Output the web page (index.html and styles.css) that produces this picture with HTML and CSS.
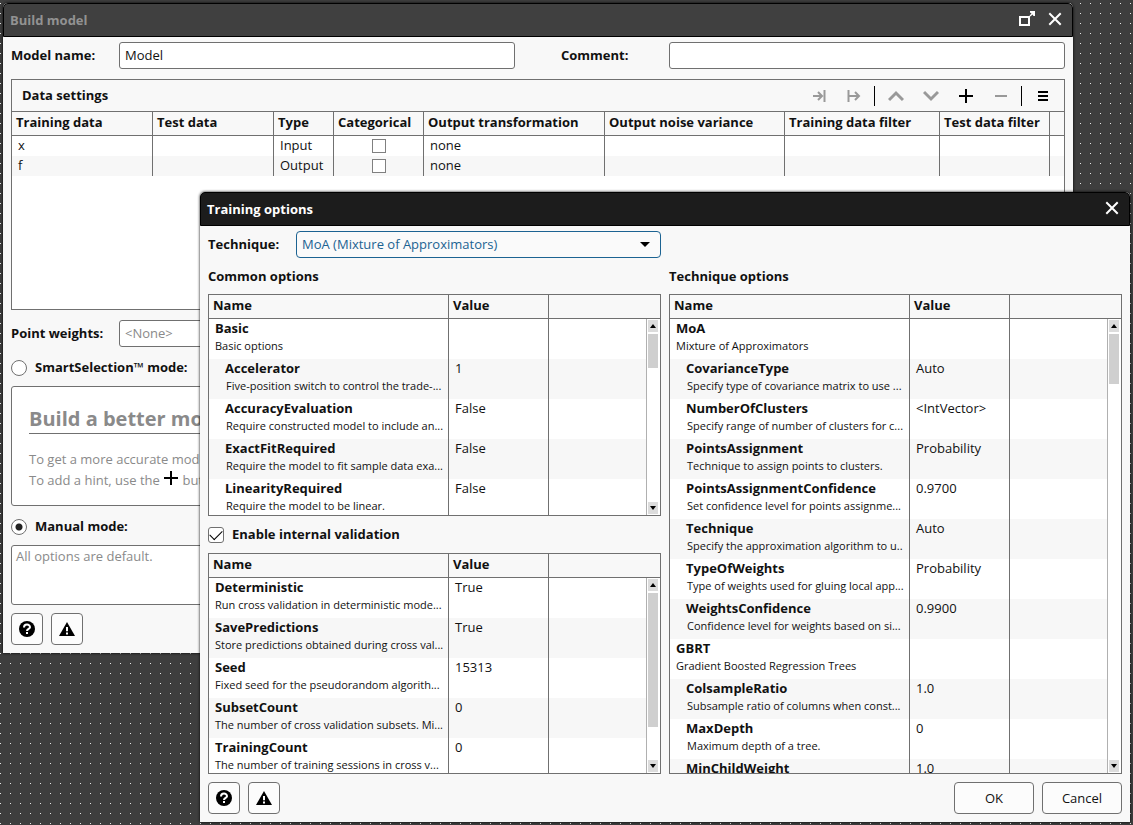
FILE: index.html
```html
<!DOCTYPE html>
<html lang="en">
<head>
  <meta charset="utf-8">
  <title>Build model</title>
  <meta name="viewport" content="width=device-width, initial-scale=1">
  <link rel="stylesheet" href="styles.css">
</head>
<body>

<!-- shared icons -->
<svg class="sprite" aria-hidden="true">
  <symbol id="close" viewBox="0 0 14 14"><path d="M2 2L12 12M12 2L2 12" stroke="#fff" stroke-width="2" fill="none" stroke-linecap="square"/></symbol>
  <symbol id="help" viewBox="0 0 16 16"><circle cx="8" cy="8" r="8"/><path d="M5 6.500C5 2.600 11 2.700 11 6.300C11 8 8 7.900 8 10" stroke="#fff" stroke-width="2" fill="none"/><rect x="7" y="11" width="2" height="2" fill="#fff"/></symbol>
  <symbol id="warning" viewBox="0 0 16 16"><path d="M8 1L16 15H0Z"/><path d="M7 6H9V10.300H7ZM7 11.500H9V13.500H7Z" fill="#fff"/></symbol>
  <symbol id="plus" viewBox="0 0 14 14"><path d="M7 0V14M0 7H14" stroke="#000" stroke-width="2"/></symbol>
</svg>

<!-- Build model window -->
<div class="window build-window">
  <header class="titlebar">
    <h1>Build model</h1>
    <button class="title-btn" aria-label="Maximize">
      <svg width="18" height="18" viewBox="0 0 18 18"><path d="M2 7H11V15H2Z" stroke="#fff" stroke-width="2" fill="none"/><path d="M12 1H17V6H15.500L14.500 4.500L12.500 6.500L11.500 5.500L13.500 3.500L12 2.500Z" fill="#fff"/></svg>
    </button>
    <button class="title-btn" aria-label="Close"><svg width="14" height="14"><use href="#close"/></svg></button>
  </header>

  <div class="build-body">
    <div class="name-row">
      <label for="modelName">Model name:</label>
      <input type="text" class="field" id="modelName" value="Model">
      <label for="comment" class="comment-label">Comment:</label>
      <input type="text" class="field" id="comment">
    </div>

    <section class="data-panel">
      <div class="toolbar">
        <h2>Data settings</h2>
        <button class="tool" aria-label="Move to end"><svg width="14" height="14" viewBox="0 0 14 14" class="dim"><path d="M1 7H10M6 3L10 7L6 11M12.500 1V13"/></svg></button>
        <button class="tool" aria-label="Move from start"><svg width="14" height="14" viewBox="0 0 14 14" class="dim"><path d="M1.500 1V13M2 7H12M8 3L12 7L8 11"/></svg></button>
        <span class="divider"></span>
        <button class="tool" aria-label="Move up"><svg width="16" height="14" viewBox="0 0 16 14" class="dim thick"><path d="M1 11L8 4L15 11"/></svg></button>
        <button class="tool" aria-label="Move down"><svg width="16" height="14" viewBox="0 0 16 14" class="dim thick"><path d="M1 3L8 10L15 3"/></svg></button>
        <button class="tool" aria-label="Add"><svg width="14" height="14"><use href="#plus"/></svg></button>
        <button class="tool" aria-label="Remove"><svg width="14" height="14" viewBox="0 0 14 14" class="dim"><path d="M1 7H13"/></svg></button>
        <span class="divider"></span>
        <button class="tool" aria-label="Menu"><svg width="12" height="12" viewBox="0 0 12 12"><path d="M1 2H11M1 6H11M1 10H11" stroke="#000" stroke-width="2"/></svg></button>
      </div>
      <table class="data-table">
        <colgroup>
          <col class="c-train"><col class="c-test"><col class="c-type"><col class="c-cat"><col class="c-trans"><col class="c-noise"><col class="c-trfilter"><col class="c-tefilter"><col>
        </colgroup>
        <thead>
          <tr><th>Training data</th><th>Test data</th><th>Type</th><th>Categorical</th><th>Output transformation</th><th>Output noise variance</th><th>Training data filter</th><th>Test data filter</th><th></th></tr>
        </thead>
        <tbody>
          <tr><td>x</td><td></td><td>Input</td><td class="check-cell"><input type="checkbox" class="small-check" aria-label="x categorical"></td><td>none</td><td></td><td></td><td></td><td></td></tr>
          <tr><td>f</td><td></td><td>Output</td><td class="check-cell"><input type="checkbox" class="small-check" aria-label="f categorical"></td><td>none</td><td></td><td></td><td></td><td></td></tr>
        </tbody>
      </table>
    </section>

    <div class="weights-row">
      <label for="weights">Point weights:</label>
      <input type="text" class="field" id="weights" placeholder="&lt;None&gt;">
    </div>

    <div class="mode"><input type="radio" name="mode" id="smartMode"><label for="smartMode">SmartSelection™ mode:</label></div>
    <div class="hints">
      <h2>Build a better model with hints</h2>
      <p>To get a more accurate model, add hints.<br>To add a hint, use the <svg width="16" height="14"><use href="#plus"/></svg> button.</p>
    </div>

    <div class="mode"><input type="radio" name="mode" id="manualMode" checked><label for="manualMode">Manual mode:</label></div>
    <textarea class="manual" aria-label="Manual options" placeholder="All options are default."></textarea>

    <footer class="actions">
      <button class="icon-btn" aria-label="Help"><svg width="16" height="16"><use href="#help"/></svg></button>
      <button class="icon-btn" aria-label="Warnings"><svg width="16" height="16"><use href="#warning"/></svg></button>
    </footer>
  </div>
</div>

<!-- Training options window -->
<div class="window options-window">
  <header class="titlebar">
    <h1>Training options</h1>
    <button class="title-btn" aria-label="Close"><svg width="14" height="14"><use href="#close"/></svg></button>
  </header>

  <div class="options-body">
    <div class="columns">
      <div class="column">
        <div class="technique">
          <label for="technique">Technique:</label>
          <div class="select-wrap">
            <select id="technique"><option>MoA (Mixture of Approximators)</option></select>
          </div>
        </div>
        <h2>Common options</h2>
        <div class="option-panel common">
          <table class="option-table">
            <colgroup><col class="c-name"><col class="c-value"><col></colgroup>
            <thead><tr><th>Name</th><th>Value</th><th></th></tr></thead>
            <tbody>
              <tr><td><b>Basic</b><small>Basic options</small></td><td></td><td></td></tr>
              <tr class="sub"><td><b>Accelerator</b><small>Five-position switch to control the trade-...</small></td><td>1</td><td></td></tr>
              <tr class="sub"><td><b>AccuracyEvaluation</b><small>Require constructed model to include an...</small></td><td>False</td><td></td></tr>
              <tr class="sub"><td><b>ExactFitRequired</b><small>Require the model to fit sample data exa...</small></td><td>False</td><td></td></tr>
              <tr class="sub"><td><b>LinearityRequired</b><small>Require the model to be linear.</small></td><td>False</td><td></td></tr>
            </tbody>
          </table>
          <div class="scrollbar"><i class="up"></i><i class="thumb"></i><i class="down"></i></div>
        </div>

        <div class="validation"><input type="checkbox" id="validation" checked><label for="validation">Enable internal validation</label></div>
        <div class="option-panel cross">
          <table class="option-table">
            <colgroup><col class="c-name"><col class="c-value"><col></colgroup>
            <thead><tr><th>Name</th><th>Value</th><th></th></tr></thead>
            <tbody>
              <tr><td><b>Deterministic</b><small>Run cross validation in deterministic mode...</small></td><td>True</td><td></td></tr>
              <tr><td><b>SavePredictions</b><small>Store predictions obtained during cross val...</small></td><td>True</td><td></td></tr>
              <tr><td><b>Seed</b><small>Fixed seed for the pseudorandom algorith...</small></td><td>15313</td><td></td></tr>
              <tr><td><b>SubsetCount</b><small>The number of cross validation subsets. Mi...</small></td><td>0</td><td></td></tr>
              <tr><td><b>TrainingCount</b><small>The number of training sessions in cross v...</small></td><td>0</td><td></td></tr>
            </tbody>
          </table>
          <div class="scrollbar"><i class="up"></i><i class="thumb"></i><i class="down"></i></div>
        </div>
      </div>

      <div class="column technique-column">
        <h2>Technique options</h2>
        <div class="option-panel specific">
          <table class="option-table">
            <colgroup><col class="c-name"><col class="c-value"><col></colgroup>
            <thead><tr><th>Name</th><th>Value</th><th></th></tr></thead>
            <tbody>
              <tr><td><b>MoA</b><small>Mixture of Approximators</small></td><td></td><td></td></tr>
              <tr class="sub"><td><b>CovarianceType</b><small>Specify type of covariance matrix to use ...</small></td><td>Auto</td><td></td></tr>
              <tr class="sub"><td><b>NumberOfClusters</b><small>Specify range of number of clusters for c...</small></td><td>&lt;IntVector&gt;</td><td></td></tr>
              <tr class="sub"><td><b>PointsAssignment</b><small>Technique to assign points to clusters.</small></td><td>Probability</td><td></td></tr>
              <tr class="sub"><td><b>PointsAssignmentConfidence</b><small>Set confidence level for points assignme...</small></td><td>0.9700</td><td></td></tr>
              <tr class="sub"><td><b>Technique</b><small>Specify the approximation algorithm to u..</small></td><td>Auto</td><td></td></tr>
              <tr class="sub"><td><b>TypeOfWeights</b><small>Type of weights used for gluing local app...</small></td><td>Probability</td><td></td></tr>
              <tr class="sub"><td><b>WeightsConfidence</b><small>Confidence level for weights based on si...</small></td><td>0.9900</td><td></td></tr>
              <tr><td><b>GBRT</b><small>Gradient Boosted Regression Trees</small></td><td></td><td></td></tr>
              <tr class="sub"><td><b>ColsampleRatio</b><small>Subsample ratio of columns when const...</small></td><td>1.0</td><td></td></tr>
              <tr class="sub"><td><b>MaxDepth</b><small>Maximum depth of a tree.</small></td><td>0</td><td></td></tr>
              <tr class="sub"><td><b>MinChildWeight</b><small></small></td><td>1.0</td><td></td></tr>
            </tbody>
          </table>
          <div class="scrollbar"><i class="up"></i><i class="thumb"></i><i class="down"></i></div>
        </div>
      </div>
    </div>

    <footer class="actions">
      <button class="icon-btn" aria-label="Help"><svg width="16" height="16"><use href="#help"/></svg></button>
      <button class="icon-btn" aria-label="Warnings"><svg width="16" height="16"><use href="#warning"/></svg></button>
      <span class="spacer"></span>
      <button class="text-btn">OK</button>
      <button class="text-btn">Cancel</button>
    </footer>
  </div>
</div>

</body>
</html>
```
FILE: styles.css
```css
* {
  box-sizing: border-box;
}

body {
  margin: 0;
  min-height: 100vh;
  overflow: hidden;
  position: relative;
  background-color: #3e3e3e;
  background-image: conic-gradient(from 270deg at 1px 1px, #e8e8e8 90deg, transparent 90deg);
  background-size: 10px 10px;
  background-position: 0 3px;
  font-family: "Open Sans", "Noto Sans", sans-serif;
  font-size: 13px;
  line-height: 18px;
  color: #111;
}

h1, h2, p {
  margin: 0;
  font-size: 13px;
}

label {
  font-weight: bold;
  padding-bottom: 2px;
}

button, input, select, textarea {
  font: inherit;
  color: inherit;
  margin: 0;
}

.sprite {
  display: none;
}

/* windows */
.window {
  position: absolute;
  background: #f8f8f8;
  border-radius: 5px 5px 0 0;
  box-shadow: 0 0 3px #000;
}

.build-window {
  top: 3px;
  left: 3px;
  right: 60px;
}

.options-window {
  top: 192px;
  left: 200px;
  right: 3px;
}

.titlebar {
  display: flex;
  align-items: center;
  height: 34px;
  padding: 0 10px 0 6px;
  gap: 12px;
  background: #1c1c1c;
  color: #fff;
  border: 1px solid #000;
  border-radius: 5px 5px 0 0;
}

.titlebar h1 {
  flex: 1;
}

.build-window .titlebar {
  background: #404040;
}

.build-window h1 {
  color: #929292;
}

.title-btn {
  display: flex;
  padding: 0 0 2px;
  border: none;
  background: none;
}

/* Build model */
.build-body {
  padding: 5px 8px 8px;
}

.name-row {
  display: grid;
  grid-template-columns: 108px 1fr 154px 1fr;
  align-items: center;
}

.comment-label {
  padding-left: 46px;
}

.field {
  width: 100%;
  height: 27px;
  padding: 0 5px 2px;
  border: 1px solid #707070;
  border-radius: 3px;
  background: #fff;
}

.field::placeholder,
.manual::placeholder {
  color: #8a8a8a;
}

.data-panel {
  height: 231px;
  margin: 10px 0;
  border: 1px solid #707070;
  background: #fff;
}

.toolbar {
  display: flex;
  align-items: center;
  height: 31px;
  padding: 0 4px 0 10px;
  background: #f8f8f8;
}

.toolbar h2 {
  flex: 1;
  padding-bottom: 2px;
}

.tool {
  display: flex;
  align-items: center;
  justify-content: center;
  width: 35px;
  height: 24px;
  padding: 0;
  border: none;
  background: none;
}

.dim {
  stroke: #999;
  stroke-width: 2;
  fill: none;
}

.thick {
  stroke-width: 3;
}

.divider {
  width: 1px;
  height: 20px;
  margin: 0 3px;
  background: #000;
}

table {
  width: 100%;
  table-layout: fixed;
  border-collapse: separate;
  border-spacing: 0;
}

th {
  height: 24px;
  padding: 0 4px 3px;
  text-align: left;
  white-space: nowrap;
  background: #f8f8f8;
  border-right: 1px solid #707070;
  border-bottom: 1px solid #707070;
}

td {
  padding: 0 6px;
  border-right: 1px solid #707070;
}

th:last-child,
td:last-child {
  border-right: none;
}

tbody tr:nth-child(even) {
  background: #f7f7f7;
}

.data-table th {
  height: 25px;
  border-top: 1px solid #707070;
}

.data-table td {
  height: 20px;
  padding-bottom: 2px;
}

.data-table .check-cell {
  padding-bottom: 0;
}

.c-train { width: 141px; }
.c-test { width: 121px; }
.c-type { width: 60px; }
.c-cat { width: 90px; }
.c-trans { width: 181px; }
.c-noise { width: 180px; }
.c-trfilter { width: 155px; }
.c-tefilter { width: 110px; }

.small-check {
  appearance: none;
  display: block;
  width: 14px;
  height: 14px;
  margin: 0 auto;
  border: 1px solid #808080;
  background: #fff;
}

.weights-row {
  display: grid;
  grid-template-columns: 108px 1fr;
  align-items: center;
}

.mode,
.validation {
  display: flex;
  align-items: center;
  gap: 8px;
  height: 16px;
}

.mode {
  margin: 13px 0 10px;
}

.mode input {
  appearance: none;
  width: 16px;
  height: 16px;
  border: 1px solid #707070;
  border-radius: 50%;
  background: #fff;
}

.mode input:checked {
  background: radial-gradient(circle, #222 3px, #fff 4px);
}

.hints {
  height: 120px;
  padding: 18px 17px;
  border: 1px solid #707070;
  border-radius: 3px;
  background: #fff;
  color: #8a8a8a;
  line-height: 21px;
}

.hints h2 {
  font-size: 20px;
  line-height: 28px;
  border-bottom: 1px solid #707070;
  margin-bottom: 15px;
}

.manual {
  display: block;
  width: 100%;
  height: 60px;
  padding: 1px 4px;
  border: 1px solid #707070;
  border-radius: 3px;
  resize: none;
  background: #fff;
}

.actions {
  display: flex;
  gap: 8px;
  margin-top: 8px;
}

.icon-btn,
.text-btn {
  display: flex;
  align-items: center;
  justify-content: center;
  width: 32px;
  height: 32px;
  padding: 0;
  border: 1px solid #707070;
  border-radius: 4px;
  background: #fcfcfc;
}

.text-btn {
  width: 80px;
}

.spacer {
  flex: 1;
}

/* Training options */
.options-body {
  padding: 5px 8px 8px;
}

.columns {
  display: grid;
  grid-template-columns: 1fr 1fr;
  gap: 8px;
}

.column {
  display: flex;
  flex-direction: column;
  min-width: 0;
}

.column h2 {
  margin: 9px 0;
}

.technique-column {
  padding-top: 27px;
}

.technique {
  display: grid;
  grid-template-columns: 88px 1fr;
  align-items: center;
}

.select-wrap {
  position: relative;
}

.select-wrap select {
  appearance: none;
  display: block;
  width: 100%;
  height: 27px;
  padding: 0 5px 2px;
  border: 1px solid #1c6392;
  border-radius: 4px;
  background: #fafafa;
  color: #1c6392;
}

/* arrow over the drop-down */
.select-wrap::after {
  content: "";
  position: absolute;
  right: 11px;
  top: 11px;
  border: 5px solid transparent;
  border-top-color: #000;
  border-bottom: none;
}

/* the scrollbar shares the grid with the table, below its header */
.option-panel {
  display: grid;
  grid-template: 24px minmax(0, 1fr) / minmax(0, 1fr) 14px;
  overflow: hidden;
  border: 1px solid #707070;
  background: #fff;
}

.common {
  height: 222px;
}

.cross {
  height: 221px;
}

.specific {
  flex: 1 0 480px;
  height: 480px;
}

.option-table {
  grid-area: 1 / 1 / 3 / 3;
  align-self: start;
}

.option-table td {
  height: 40px;
  vertical-align: top;
  white-space: nowrap;
  overflow: hidden;
}

.option-table b,
.option-table small {
  display: block;
}

.option-table small {
  font-size: 11px;
}

.sub td:first-child {
  padding-left: 16px;
  padding-right: 0;
}

.sub small {
  padding-left: 1px;
}

.c-name { width: 240px; }
.c-value { width: 100px; }

.validation {
  margin: 11px 0 10px;
}

.validation input {
  appearance: none;
  width: 16px;
  height: 16px;
  border: 1px solid #707070;
  border-radius: 3px;
  background: #fff;
  display: grid;
  place-items: center;
}

.validation input:checked::after {
  content: "";
  width: 11px;
  height: 6px;
  border-left: 1px solid #000;
  border-bottom: 1px solid #000;
  transform: translateY(-2px) rotate(-45deg);
}

.scrollbar {
  grid-area: 2 / 2;
  display: flex;
  flex-direction: column;
  padding: 1px 2px 1px 1px;
  gap: 2px;
  border-left: 1px solid #b0b0b0;
  background: #fff;
}

.up, .down {
  display: grid;
  place-items: center;
  flex: none;
  height: 12px;
  background: #dcdcdc;
}

.down {
  margin-top: auto;
}

.up::after, .down::after {
  content: "";
  border: 3px solid transparent;
}

.up::after {
  border-top: none;
  border-bottom: 4px solid #000;
}

.down::after {
  border-bottom: none;
  border-top: 4px solid #000;
}

.thumb {
  height: 34px;
  background: #cfcfcf;
}

.cross .thumb {
  height: 134px;
}

.specific .thumb {
  height: 50px;
}
```
